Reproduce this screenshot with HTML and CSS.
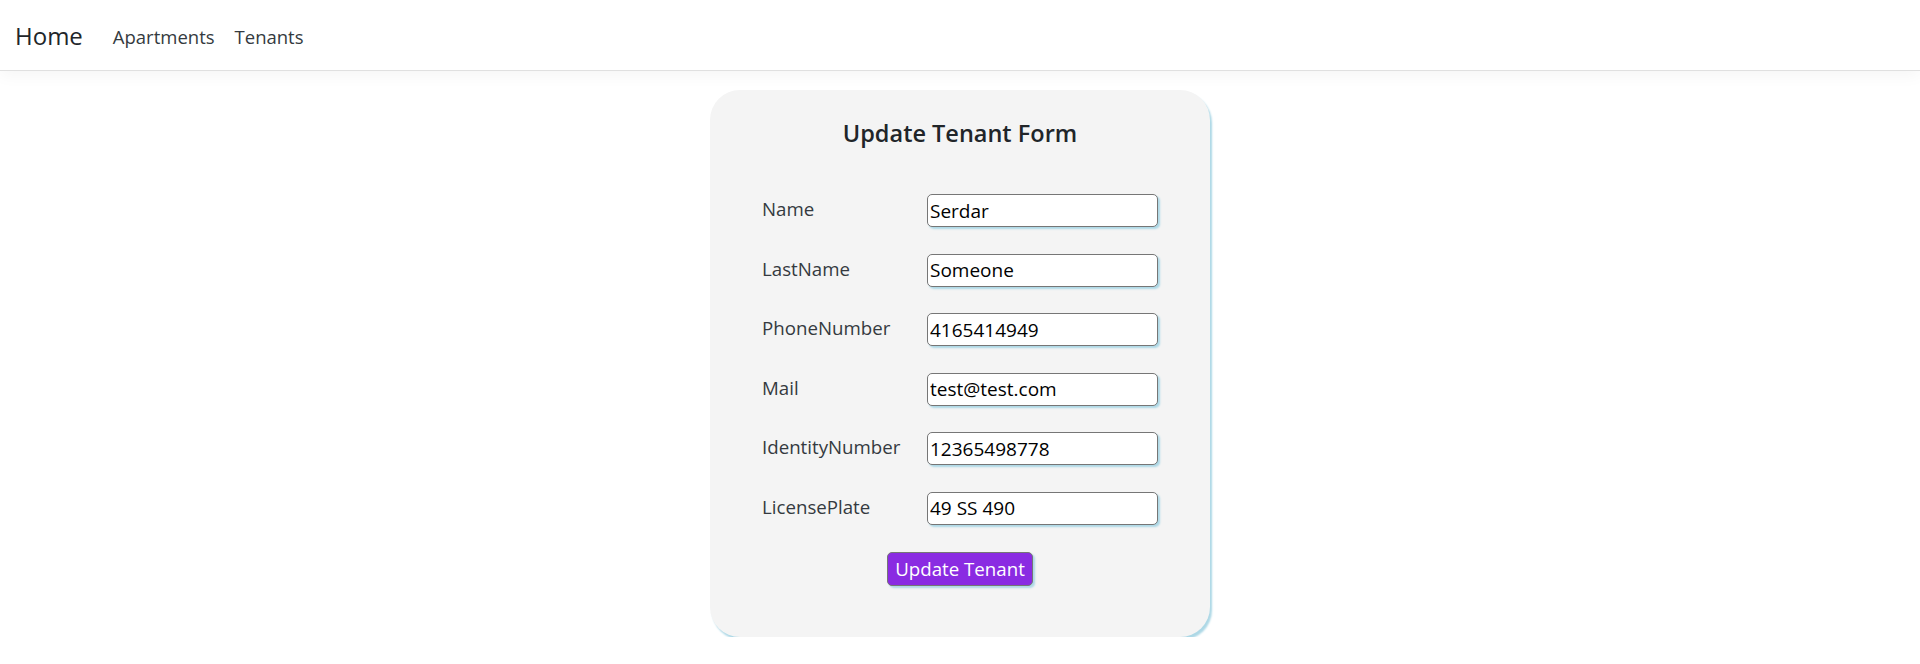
FILE: index.html
```html
<!DOCTYPE html>
<html lang="en">
<head>
<meta charset="utf-8">
<title>Update Tenant</title>
<link rel="stylesheet" href="styles.css">
</head>
<body>
<header class="navbar">
  <a class="brand" href="#">Home</a>
  <nav class="nav-links">
    <a href="#">Apartments</a>
    <a href="#">Tenants</a>
  </nav>
</header>
<main class="main">
  <form class="card">
    <h2 class="card-title">Update Tenant Form</h2>
    <div class="fields">
      <label class="row"><span class="label">Name</span><input class="input" type="text" value="Serdar"></label>
      <label class="row"><span class="label">LastName</span><input class="input" type="text" value="Someone"></label>
      <label class="row"><span class="label">PhoneNumber</span><input class="input" type="text" value="4165414949"></label>
      <label class="row"><span class="label">Mail</span><input class="input" type="text" value="test@test.com"></label>
      <label class="row"><span class="label">IdentityNumber</span><input class="input" type="text" value="12365498778"></label>
      <label class="row"><span class="label">LicensePlate</span><input class="input" type="text" value="49 SS 490"></label>
      <div class="actions"><button class="btn" type="button">Update Tenant</button></div>
    </div>
  </form>
</main>
</body>
</html>
```
FILE: styles.css
```css
* { box-sizing: border-box; }
html, body { margin: 0; padding: 0; background: #fff; }
body {
  font-family: "Open Sans", "Noto Sans", sans-serif;
  color: #212529;
}
.navbar {
  height: 71px;
  display: flex;
  align-items: center;
  padding: 0 15px;
  border-bottom: 1px solid #e0e0e0;
  box-shadow: 0 5px 15px rgba(0,0,0,0.04);
}
.brand {
  font-size: 24px;
  color: #212529;
  text-decoration: none;
  margin-right: 30px;
  margin-top: 1px;
}
.nav-links { display: flex; gap: 20px; }
.nav-links a {
  font-size: 18.5px;
  color: #343a40;
  text-decoration: none;
  margin-top: 2px;
}
.main {
  display: flex;
  justify-content: center;
  padding-top: 19px;
}
.card {
  width: 500px;
  background: #f4f4f4;
  border-radius: 30px;
  box-shadow: 2px 3px 2px #add8e6;
  padding: 26px 52px 51px;
}
.card-title {
  margin: 0 0 44px;
  text-align: center;
  font-size: 23.5px;
  font-weight: 600;
  line-height: 34px;
  color: #212529;
}
.fields {
  display: flex;
  flex-direction: column;
  gap: 26.6px;
}
.row {
  display: flex;
  align-items: center;
}
.label {
  width: 165px;
  font-size: 18.7px;
  color: #343a40;
  margin-top: -4px;
}
.input {
  width: 231px;
  height: 33px;
  border: 1px solid #767676;
  border-radius: 5px;
  background: #fff;
  box-shadow: 2px 2px 2px #add8e6;
  font-family: inherit;
  font-size: 19px;
  color: #000;
  padding: 0 2px;
}
.actions { display: flex; justify-content: center; }
.btn {
  height: 34px;
  padding: 0 7px;
  background: #8a2be2;
  color: #fff;
  border: 1px solid #767676;
  border-radius: 5px;
  box-shadow: 2px 2px 2px #add8e6;
  font-family: inherit;
  font-size: 18.7px;
}
```
